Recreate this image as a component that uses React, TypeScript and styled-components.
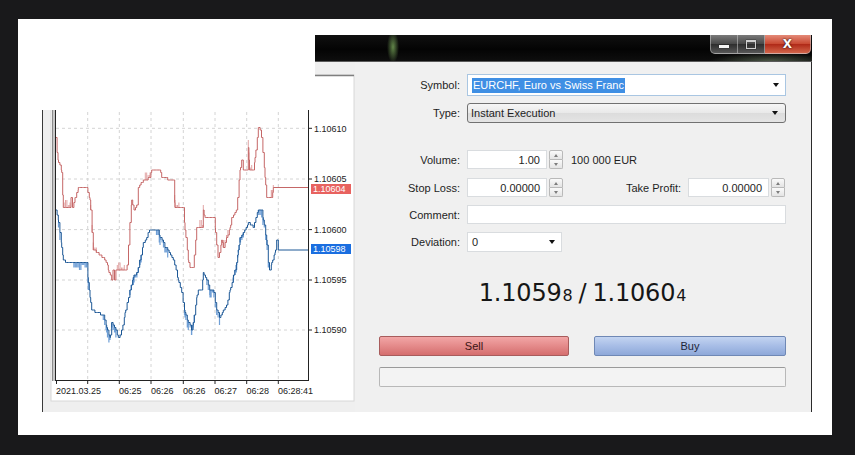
import React from 'react'
import styled, { createGlobalStyle } from 'styled-components'

const GlobalStyle = createGlobalStyle`
  html, body {
    margin: 0;
    padding: 0;
    background: #19191b;
  }
  body {
    width: 855px;
    height: 455px;
    overflow: hidden;
    font-family: 'Liberation Sans', Arial, sans-serif;
  }
`

const Page = styled.div`
  width: 855px;
  height: 455px;
  padding: 19px 0 0 18px;
  box-sizing: border-box;
`

const Frame = styled.div`
  width: 814px;
  height: 416px;
  background: #fff;
  padding: 16px 0 0 24px;
  box-sizing: border-box;
`

const Window = styled.div`
  width: 770px;
  display: flex;
  flex-direction: column;
`

const TitleRow = styled.div`
  display: flex;
  justify-content: flex-end;
  height: 27px;
`

const TitleBar = styled.div`
  width: 497px;
  height: 27px;
  box-sizing: border-box;
  border-bottom: 1px solid #5a5a5a;
  background:
    radial-gradient(ellipse 6px 16px at 78px 12px, rgba(120, 165, 90, 0.8), transparent),
    radial-gradient(ellipse 60px 8px at 455px 26px, rgba(120, 140, 110, 0.55), transparent),
    linear-gradient(#101010, #040404 55%, #0e0e0e);
  display: flex;
  justify-content: flex-end;
  align-items: flex-start;
`

const CaptionGroup = styled.div`
  display: flex;
  height: 19px;
  margin-right: 1px;
`

const CaptionButton = styled.div<{ $w: number; $kind: 'min' | 'max' | 'close' }>`
  width: ${p => p.$w}px;
  height: 19px;
  box-sizing: border-box;
  display: flex;
  align-items: center;
  justify-content: center;
  border: 1px solid rgba(200, 200, 200, 0.55);
  border-top: none;
  border-left: ${p => (p.$kind === 'min' ? '1px solid rgba(200,200,200,0.55)' : 'none')};
  border-radius: ${p =>
    p.$kind === 'min' ? '0 0 0 5px' : p.$kind === 'close' ? '0 0 5px 0' : '0'};
  background: ${p =>
    p.$kind === 'close'
      ? 'linear-gradient(#e48a78, #c94a33 48%, #b02a18 52%, #d2654a)'
      : 'linear-gradient(#7a7a7a, #4a4a4a 48%, #2e2e2e 52%, #575757)'};
  color: #fff;
  font-family: 'DejaVu Sans', sans-serif;
  font-weight: bold;
  font-size: 12px;
  text-shadow: 0 0 2px #000;
`

const MinGlyph = styled.div`
  width: 10px;
  height: 3px;
  margin-top: 5px;
  background: #f4f4f4;
  box-shadow: 0 0 1px #000;
`

const MaxGlyph = styled.div`
  width: 8px;
  height: 6px;
  border: 1px solid #cfcfcf;
  border-top-width: 2px;
  box-shadow: 0 0 1px #000;
`

const Body = styled.div`
  display: flex;
  height: 350px;
`

const ChartPane = styled.div`
  width: 313px;
  height: 350px;
  flex: none;
`

const FormPane = styled.div`
  flex: 1;
  background: #f0f0f0;
  border-right: 1px solid #2a2a2a;
  padding-top: 12px;
  box-sizing: border-box;
  display: flex;
  flex-direction: column;
  color: #1e1e1e;
  font-size: 11px;
`

const Row = styled.div<{ $h: number; $mt?: number }>`
  display: flex;
  align-items: center;
  height: ${p => p.$h}px;
  margin-top: ${p => p.$mt ?? 0}px;
`

const Label = styled.div<{ $w?: number }>`
  width: ${p => p.$w ?? 112}px;
  flex: none;
  text-align: right;
  padding-right: 7px;
  box-sizing: border-box;
  white-space: nowrap;
`

const Field = styled.div<{ $w: number; $right?: boolean; $focus?: boolean }>`
  width: ${p => p.$w}px;
  flex: none;
  height: 100%;
  box-sizing: border-box;
  background: #fff;
  border: 1px solid ${p => (p.$focus ? '#a9c6e2' : '#d9dcdf')};
  display: flex;
  align-items: center;
  justify-content: ${p => (p.$right ? 'flex-end' : 'flex-start')};
  padding: 0 6px 0 4px;
  white-space: nowrap;
`

const Combo = styled(Field)`
  background: linear-gradient(#f6f6f6, #e9e9e9 50%, #dcdcdc 51%, #e4e4e4);
  border: 1px solid #717171;
  border-radius: 3px;
  padding: 0 7px 0 3px;
`

const Selected = styled.span`
  background: #3f8fe4;
  color: #fff;
  padding: 1px 1px 2px;
`

const Arrow = styled.span`
  margin-left: auto;
  width: 0;
  height: 0;
  border-left: 3.5px solid transparent;
  border-right: 3.5px solid transparent;
  border-top: 4px solid #111;
`

const Spinner = styled.div`
  width: 14px;
  height: 19px;
  margin-left: 2px;
  display: flex;
  flex-direction: column;
  flex: none;
`

const SpinHalf = styled.div<{ $down?: boolean }>`
  flex: 1;
  box-sizing: border-box;
  border: 1px solid #b9b9b9;
  border-top: ${p => (p.$down ? 'none' : '1px solid #b9b9b9')};
  background: linear-gradient(#fafafa, #e4e4e4);
  border-radius: ${p => (p.$down ? '0 0 2px 2px' : '2px 2px 0 0')};
  display: flex;
  align-items: center;
  justify-content: center;
  &::after {
    content: '';
    width: 0;
    height: 0;
    border-left: 2.5px solid transparent;
    border-right: 2.5px solid transparent;
    ${p => (p.$down ? 'border-top: 3px solid #7d7d7d;' : 'border-bottom: 3px solid #7d7d7d;')}
  }
`

const Note = styled.span`
  margin-left: 8px;
`

const Spacer = styled.div<{ $w?: number }>`
  flex: ${p => (p.$w ? 'none' : '1')};
  width: ${p => p.$w ?? 0}px;
`

const PriceRow = styled.div`
  margin-top: 28px;
  height: 26px;
  padding-left: 24px;
  width: 431px;
  box-sizing: border-box;
  display: flex;
  align-items: center;
  justify-content: center;
  font-family: 'DejaVu Sans', Verdana, sans-serif;
  font-size: 24px;
  color: #161616;
  letter-spacing: -0.2px;
`

const Pip = styled.span`
  font-size: 16px;
  margin-left: 1px;
  align-self: center;
  padding-top: 5px;
`

const Slash = styled.span`
  margin: 0 6px;
`

const ButtonRow = styled.div`
  margin-top: 30px;
  padding-left: 24px;
  display: flex;
  gap: 25px;
`

const TradeButton = styled.div<{ $side: 'sell' | 'buy' }>`
  width: ${p => (p.$side === 'sell' ? 190 : 192)}px;
  height: 20px;
  box-sizing: border-box;
  border-radius: 2px;
  display: flex;
  align-items: center;
  justify-content: center;
  font-size: 11px;
  color: ${p => (p.$side === 'sell' ? '#3a1414' : '#1c2438')};
  border: 1px solid ${p => (p.$side === 'sell' ? '#a85c5c' : '#6f88b5')};
  background: ${p =>
    p.$side === 'sell'
      ? 'linear-gradient(#f2a6a6, #e48a8a 50%, #d56e6e)'
      : 'linear-gradient(#c3d4f1, #a7bde6 50%, #8ea8d9)'};
`

const Progress = styled.div`
  margin: 11px 0 0 24px;
  width: 407px;
  height: 20px;
  box-sizing: border-box;
  border: 1px solid #b8b8b8;
  border-top-color: #9a9a9a;
  border-radius: 2px;
  background: #f3f3f3;
`

type Pt = [number, number]

const red: Pt[] = [
  [55.7, 138], [58, 160], [61.7, 172], [63.3, 208], [70, 208], [71, 198], [72.5, 208], [75, 198],
  [78.3, 188.3], [86.7, 188.3], [90, 200], [93.3, 250], [100, 255], [106.7, 262], [108.3, 270],
  [111.7, 280], [113, 270], [114.5, 280], [116, 270], [126.7, 270], [130, 222], [131.7, 200],
  [134, 210], [136.7, 206], [138.3, 188.3], [143.3, 180], [150, 178], [151.7, 169.3], [160, 169.3],
  [161.7, 178.3], [173.3, 179.3], [175, 208.3], [183.3, 208.3], [185, 230], [188.3, 260], [190, 267],
  [193.3, 267], [196.7, 228.3], [203, 228.3], [203.3, 210], [205, 218.3], [215, 218.3], [215.5, 233],
  [218, 258], [220, 252], [221.7, 240], [223.3, 248.3], [230, 228.3], [231.7, 218.3], [236.7, 210],
  [240, 170], [241.7, 160], [243.3, 169.3], [248, 169.3], [248.3, 148.3], [249.5, 169.3],
  [253.3, 169.3], [255, 158], [258.3, 128.3], [260, 128.3], [261.7, 138.3], [265, 176.7],
  [266.7, 196.7], [271.7, 196.7], [273.3, 188.3],
]

const blue: Pt[] = [
  [55.7, 210], [58.3, 220], [61.7, 246.7], [63.3, 260], [66.7, 263.3], [86.7, 263.3], [88.3, 283.3],
  [90, 296.7], [91.7, 310], [103.3, 315], [106.7, 326.7], [110, 338.3], [111.7, 321.7], [115, 328],
  [118.3, 338.3], [121.7, 330], [125, 313.3], [130, 290], [133.3, 276.7], [136.7, 273.3], [140, 260],
  [143.3, 243.3], [148.3, 233.3], [150, 230], [158.3, 230], [160, 236.7], [165, 246.7], [170, 253.3],
  [173.3, 260], [178.3, 280], [181.7, 293.3], [185, 313.3], [188.3, 321.7], [191.7, 330],
  [193.3, 321.7], [196.7, 296.7], [198.3, 290], [201.7, 290], [203.3, 273.3], [206.7, 280],
  [210, 290], [213.3, 290], [216.7, 310], [220, 318.3], [223.3, 310], [226.7, 305], [230, 290],
  [233.3, 276.7], [236.7, 263.3], [238.3, 250], [240, 238.3], [243.3, 231.7], [248.3, 223.3],
  [253.3, 226.7], [258.3, 210], [261.7, 210], [263.3, 220], [266.7, 240], [268.3, 262],
  [269.5, 270], [271.7, 263.3], [275, 253.3], [276.7, 240], [278.3, 249],
]

const hash = (i: number) => (((i * 9301 + 49297) % 233280) + 233280) % 233280 / 233280

const interp = (pts: Pt[], x: number) => {
  for (let i = 0; i < pts.length - 1; i++) {
    const [x0, y0] = pts[i]
    const [x1, y1] = pts[i + 1]
    if (x >= x0 && x <= x1) {
      if (x1 === x0) return y0
      return y0 + ((y1 - y0) * (x - x0)) / (x1 - x0)
    }
  }
  return pts[pts.length - 1][1]
}

// turn the key points into a tick-like step line, plus lighter jitter spikes
const buildLine = (pts: Pt[], endX: number, dir: number, rate: number, seed: number) => {
  const xs = new Set<number>(pts.map(p => +p[0].toFixed(1)))
  for (let x = pts[0][0]; x < pts[pts.length - 1][0]; x += 1.4) xs.add(+x.toFixed(1))
  const sorted = Array.from(xs).sort((a, b) => a - b)
  let main = ''
  let spikes = ''
  sorted.forEach((x, i) => {
    const y = Math.round(interp(pts, x) / 2.5) * 2.5
    main += i === 0 ? `M${x} ${y}` : ` H${x} V${y}`
    if (i > 2 && hash(i + seed) < rate) {
      spikes += ` M${x} ${y} v${dir * (2.5 + Math.round(hash(i * 3 + seed) * 2) * 2.5)}`
    }
  })
  main += ` H${endX}`
  return { main, spikes }
}

const redLine = buildLine(red, 308, -1, 0.22, 11)
const blueLine = buildLine(blue, 308, 1, 0.5, 3)

const vGrid = [87.7, 119.3, 151, 183.3, 215, 246.7, 278.3]
const hGrid: { y: number; t: string }[] = [
  { y: 128.3, t: '1.10610' },
  { y: 179, t: '1.10605' },
  { y: 229.6, t: '1.10600' },
  { y: 280, t: '1.10595' },
  { y: 330, t: '1.10590' },
]
const times: { x: number; t: string }[] = [
  { x: 56, t: '2021.03.25' },
  { x: 119, t: '06:25' },
  { x: 151, t: '06:26' },
  { x: 183, t: '06:26' },
  { x: 214.5, t: '06:27' },
  { x: 246.5, t: '06:28' },
  { x: 278, t: '06:28:41' },
]

const Chart = () => (
  <svg width="313" height="350" viewBox="42 62 313 350" fontFamily="'Liberation Sans', Arial, sans-serif">
    <rect x="42" y="62" width="313" height="350" fill="#efefef" />
    <rect x="51" y="75" width="303" height="326" fill="#fff" stroke="#d8d8d8" />
    <line x1="51" y1="75.5" x2="354" y2="75.5" stroke="#7f7f7f" strokeWidth="1.5" />
    <line x1="42.5" y1="62" x2="42.5" y2="412" stroke="#3a3a3a" />
    <rect x="52" y="75" width="3" height="306" fill="#c8c8c8" />
    <line x1="52.5" y1="75" x2="52.5" y2="381" stroke="#8a8a8a" />
    {vGrid.map(x => (
      <line key={x} x1={x} y1="76" x2={x} y2="380" stroke="#d4d4d4" strokeDasharray="3 3" />
    ))}
    {hGrid.map(g => (
      <line key={g.y} x1="56" y1={g.y} x2="308" y2={g.y} stroke="#d4d4d4" strokeDasharray="3 3" />
    ))}
    <path d={redLine.spikes} stroke="#e2a4a4" strokeWidth="1" fill="none" />
    <path d={redLine.main} stroke="#c56767" strokeWidth="1" fill="none" />
    <path d={blueLine.spikes} stroke="#6f9fd6" strokeWidth="1.2" fill="none" />
    <path d={blueLine.main} stroke="#1d5896" strokeWidth="1" fill="none" />
    <line x1="55.5" y1="76" x2="55.5" y2="380.5" stroke="#222" />
    <line x1="55" y1="380.5" x2="308.5" y2="380.5" stroke="#222" />
    <line x1="308.5" y1="76" x2="308.5" y2="381" stroke="#222" />
    {vGrid.map(x => (
      <line key={x} x1={x} y1="380" x2={x} y2="384" stroke="#222" />
    ))}
    <line x1="56.5" y1="380" x2="56.5" y2="384" stroke="#222" />
    {hGrid.map(g => (
      <g key={g.t}>
        <line x1="308" y1={g.y} x2="312" y2={g.y} stroke="#222" />
        <text x="314" y={g.y + 3.2} fontSize="9" fill="#222">{g.t}</text>
      </g>
    ))}
    <rect x="311" y="184" width="40" height="10" fill="#e8625f" />
    <text x="313" y="192.3" fontSize="9" fill="#fff">1.10604</text>
    <rect x="311" y="244" width="40" height="10" fill="#1a6ee0" />
    <text x="313" y="252.3" fontSize="9" fill="#fff">1.10598</text>
    {times.map((t, i) => (
      <text key={i} x={t.x} y="393.5" fontSize="9" fill="#222">{t.t}</text>
    ))}
    <rect x="42" y="62" width="273" height="48" fill="#fff" />
  </svg>
)

const Spin = () => (
  <Spinner>
    <SpinHalf />
    <SpinHalf $down />
  </Spinner>
)

export default function App() {
  return (
    <Page>
      <GlobalStyle />
      <Frame>
        <Window>
          <TitleRow>
            <TitleBar>
              <CaptionGroup>
                <CaptionButton $w={28} $kind="min"><MinGlyph /></CaptionButton>
                <CaptionButton $w={27} $kind="max"><MaxGlyph /></CaptionButton>
                <CaptionButton $w={46} $kind="close">X</CaptionButton>
              </CaptionGroup>
            </TitleBar>
          </TitleRow>
          <Body>
            <ChartPane>
              <Chart />
            </ChartPane>
            <FormPane>
              <Row $h={22}>
                <Label>Symbol:</Label>
                <Field $w={319} $focus>
                  <Selected>EURCHF, Euro vs Swiss Franc</Selected>
                  <Arrow />
                </Field>
              </Row>
              <Row $h={20} $mt={7}>
                <Label>Type:</Label>
                <Combo $w={319}>
                  Instant Execution
                  <Arrow />
                </Combo>
              </Row>
              <Row $h={19} $mt={27}>
                <Label>Volume:</Label>
                <Field $w={80} $right>1.00</Field>
                <Spin />
                <Note>100 000 EUR</Note>
              </Row>
              <Row $h={19} $mt={9}>
                <Label>Stop Loss:</Label>
                <Field $w={80} $right>0.00000</Field>
                <Spin />
                <Spacer />
                <Label $w={70}>Take Profit:</Label>
                <Field $w={81} $right>0.00000</Field>
                <Spin />
                <Spacer $w={26} />
              </Row>
              <Row $h={19} $mt={8}>
                <Label>Comment:</Label>
                <Field $w={319} />
              </Row>
              <Row $h={20} $mt={8}>
                <Label>Deviation:</Label>
                <Field $w={95}>
                  0
                  <Arrow />
                </Field>
              </Row>
              <PriceRow>
                1.1059<Pip>8</Pip>
                <Slash>/</Slash>
                1.1060<Pip>4</Pip>
              </PriceRow>
              <ButtonRow>
                <TradeButton $side="sell">Sell</TradeButton>
                <TradeButton $side="buy">Buy</TradeButton>
              </ButtonRow>
              <Progress />
            </FormPane>
          </Body>
        </Window>
      </Frame>
    </Page>
  )
}
